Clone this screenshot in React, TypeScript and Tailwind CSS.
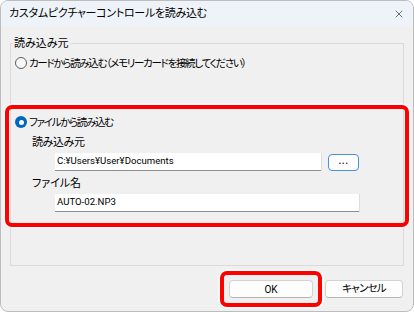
import { X } from 'lucide-react';

// ── Small pieces ───────────────────────────────────────────────────
function Radio({ checked }: { checked?: boolean }) {
  if (checked) {
    return (
      <span className="w-[12px] h-[12px] rounded-full bg-[#0067c0] flex items-center justify-center shrink-0">
        <span className="w-[5px] h-[5px] rounded-full bg-white" />
      </span>
    );
  }
  return <span className="w-[12px] h-[12px] rounded-full border border-[#5c5c5c] bg-[#f7f7f7] shrink-0" />;
}

function TextBox({ value, className = '' }: { value: string; className?: string }) {
  return (
    <div
      className={`h-[18px] bg-white border-b border-[#8f8f8f] shadow-[1px_0_0_#dcdcdc] flex items-center pl-[2px] text-[9.6px] text-black font-['Roboto',sans-serif] ${className}`}
    >
      {value}
    </div>
  );
}

function Button({ children, className = '' }: { children: React.ReactNode; className?: string }) {
  return (
    <div
      className={`h-[18px] bg-[#fdfdfd] border border-[#d3d3d3] border-b-[#b5b5b5] rounded-[4px] flex items-center justify-center text-[10.5px] text-black ${className}`}
    >
      {children}
    </div>
  );
}

// ── Dialog ─────────────────────────────────────────────────────────
export default function App() {
  return (
    <div
      className="w-[414px] h-[312px] bg-white"
      style={{ fontFamily: '"Noto Sans", "Noto Sans CJK JP", sans-serif' }}
    >
      <div className="w-full h-full rounded-[8px] border border-[#bdbdbd] bg-[#f0f0f0] overflow-hidden flex flex-col [font-feature-settings:'palt']">
        {/* title bar */}
        <div className="h-[25px] bg-[#eef3f9] flex items-center justify-between pl-[8px] pr-[8px] shrink-0">
          <span className="text-[11px] text-black tracking-[-0.3px]">カスタムピクチャーコントロールを読み込む</span>
          <X size={12} strokeWidth={1.4} className="text-[#333]" />
        </div>

        {/* body */}
        <div className="flex-1 flex flex-col px-[9px]">
          <fieldset className="mt-[10px] h-[230px] border border-[#dadada] px-0 pb-0">
            <legend className="ml-[2px] px-[1px] text-[11px] leading-[14px] text-black">読み込み元</legend>

            <div className="flex items-center gap-[2px] pl-[4px] mt-[6px] text-[10.5px] leading-[14px] text-black">
              <Radio />
              <span className="tracking-[-1.3px]">カードから読み込む（メモリーカードを接続してください）</span>
            </div>

            {/* highlighted area */}
            <div className="mt-[35px] -mx-[6px] rounded-[7px] border-4 border-[#ff0000] shadow-[0_0_0_1.5px_#ffffff] pt-[6px] h-[122px]">
              <div className="flex items-center gap-[2px] pl-[6px] text-[10.5px] leading-[14px] text-black">
                <Radio checked />
                <span className="tracking-[-1.3px]">ファイルから読み込む</span>
              </div>
              <div className="pl-[23px] mt-[6px] text-[11px] leading-[14px] text-black tracking-[-0.4px]">読み込み元</div>
              <div className="flex items-center gap-[7px] pl-[46px] mt-[4px]">
                <TextBox value="C:¥Users¥User¥Documents" className="w-[266px]" />
                <Button className="w-[31px] !border-[#4a90d9] !h-[17px]">
                  <span className="-mt-[3px] tracking-[0.5px]">...</span>
                </Button>
              </div>
              <div className="pl-[23px] mt-[5px] text-[11px] leading-[14px] text-black">ファイル名</div>
              <div className="pl-[46px] mt-[4px]">
                <TextBox value="AUTO-02.NP3" className="w-[304px]" />
              </div>
            </div>
          </fieldset>

          {/* buttons */}
          <div className="flex justify-end items-center mt-[5px] pr-[1px]">
            <div className="rounded-[7px] border-4 border-[#ff0000] shadow-[0_0_0_1.5px_#ffffff] p-[5px]">
              <Button className="w-[84px] font-['Roboto',sans-serif] !text-[10px]">OK</Button>
            </div>
            <Button className="w-[78px] ml-[3px] tracking-[-0.8px]">キャンセル</Button>
          </div>
        </div>
      </div>
    </div>
  );
}
